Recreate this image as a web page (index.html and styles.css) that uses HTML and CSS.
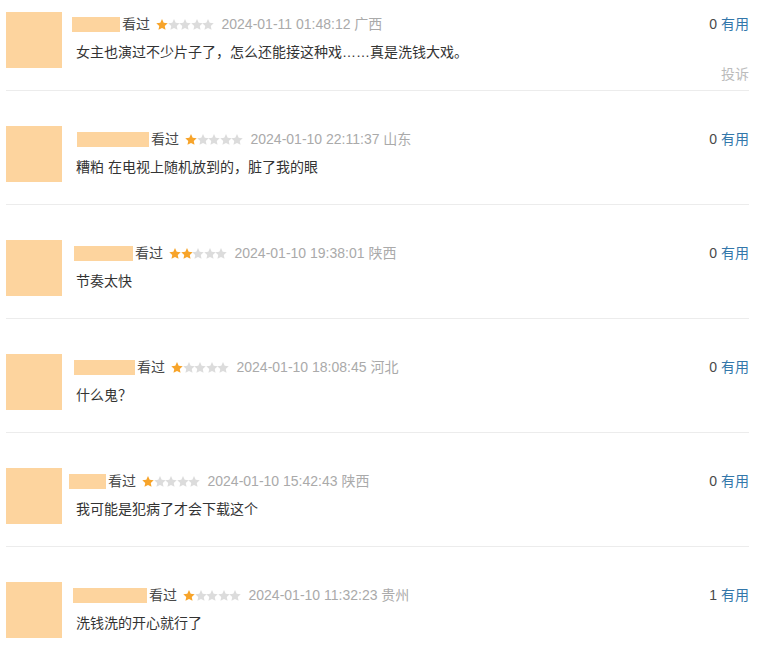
FILE: index.html
```html
<!DOCTYPE html>
<html lang="zh-CN">
<head>
  <meta charset="UTF-8" />
  <title>短评</title>
  <link rel="stylesheet" href="styles.css">
</head>
<body>
<svg class="defs" width="0" height="0">
  <defs>
    <polygon id="star" points="6,0 7.7,3.65 11.71,4.15 8.76,6.9 9.53,10.85 6,8.9 2.47,10.85 3.24,6.9 0.29,4.15 4.3,3.65"/>
  </defs>
</svg>

<div class="comments">

  <div class="item">
    <div class="avatar"></div>
    <div class="content">
      <div class="head">
        <div class="info">
          <span class="name" style="width:48px;margin-left:-4px"></span>
          <span class="watched">看过</span>
          <span class="stars">
            <svg class="star on" viewBox="0 0 12 11"><use href="#star"/></svg>
            <svg class="star" viewBox="0 0 12 11"><use href="#star"/></svg>
            <svg class="star" viewBox="0 0 12 11"><use href="#star"/></svg>
            <svg class="star" viewBox="0 0 12 11"><use href="#star"/></svg>
            <svg class="star" viewBox="0 0 12 11"><use href="#star"/></svg>
          </span>
          <span class="time">2024-01-11 01:48:12 广西</span>
        </div>
        <div class="votes">0 <a href="#">有用</a></div>
      </div>
      <p class="text">女主也演过不少片子了，怎么还能接这种戏……真是洗钱大戏。</p>
      <div class="actions"><a href="#">投诉</a></div>
    </div>
  </div>

  <div class="item">
    <div class="avatar"></div>
    <div class="content">
      <div class="head">
        <div class="info">
          <span class="name" style="width:72px;margin-left:1px"></span>
          <span class="watched">看过</span>
          <span class="stars">
            <svg class="star on" viewBox="0 0 12 11"><use href="#star"/></svg>
            <svg class="star" viewBox="0 0 12 11"><use href="#star"/></svg>
            <svg class="star" viewBox="0 0 12 11"><use href="#star"/></svg>
            <svg class="star" viewBox="0 0 12 11"><use href="#star"/></svg>
            <svg class="star" viewBox="0 0 12 11"><use href="#star"/></svg>
          </span>
          <span class="time">2024-01-10 22:11:37 山东</span>
        </div>
        <div class="votes">0 <a href="#">有用</a></div>
      </div>
      <p class="text">糟粕 在电视上随机放到的，脏了我的眼</p>
      <div class="actions hidden"><a href="#">投诉</a></div>
    </div>
  </div>

  <div class="item">
    <div class="avatar"></div>
    <div class="content">
      <div class="head">
        <div class="info">
          <span class="name" style="width:59px;margin-left:-2px"></span>
          <span class="watched">看过</span>
          <span class="stars">
            <svg class="star on" viewBox="0 0 12 11"><use href="#star"/></svg>
            <svg class="star on" viewBox="0 0 12 11"><use href="#star"/></svg>
            <svg class="star" viewBox="0 0 12 11"><use href="#star"/></svg>
            <svg class="star" viewBox="0 0 12 11"><use href="#star"/></svg>
            <svg class="star" viewBox="0 0 12 11"><use href="#star"/></svg>
          </span>
          <span class="time">2024-01-10 19:38:01 陕西</span>
        </div>
        <div class="votes">0 <a href="#">有用</a></div>
      </div>
      <p class="text">节奏太快</p>
      <div class="actions hidden"><a href="#">投诉</a></div>
    </div>
  </div>

  <div class="item">
    <div class="avatar"></div>
    <div class="content">
      <div class="head">
        <div class="info">
          <span class="name" style="width:61px;margin-left:-2px"></span>
          <span class="watched">看过</span>
          <span class="stars">
            <svg class="star on" viewBox="0 0 12 11"><use href="#star"/></svg>
            <svg class="star" viewBox="0 0 12 11"><use href="#star"/></svg>
            <svg class="star" viewBox="0 0 12 11"><use href="#star"/></svg>
            <svg class="star" viewBox="0 0 12 11"><use href="#star"/></svg>
            <svg class="star" viewBox="0 0 12 11"><use href="#star"/></svg>
          </span>
          <span class="time">2024-01-10 18:08:45 河北</span>
        </div>
        <div class="votes">0 <a href="#">有用</a></div>
      </div>
      <p class="text">什么鬼？</p>
      <div class="actions hidden"><a href="#">投诉</a></div>
    </div>
  </div>

  <div class="item">
    <div class="avatar"></div>
    <div class="content">
      <div class="head">
        <div class="info">
          <span class="name" style="width:37px;margin-left:-7px"></span>
          <span class="watched">看过</span>
          <span class="stars">
            <svg class="star on" viewBox="0 0 12 11"><use href="#star"/></svg>
            <svg class="star" viewBox="0 0 12 11"><use href="#star"/></svg>
            <svg class="star" viewBox="0 0 12 11"><use href="#star"/></svg>
            <svg class="star" viewBox="0 0 12 11"><use href="#star"/></svg>
            <svg class="star" viewBox="0 0 12 11"><use href="#star"/></svg>
          </span>
          <span class="time">2024-01-10 15:42:43 陕西</span>
        </div>
        <div class="votes">0 <a href="#">有用</a></div>
      </div>
      <p class="text">我可能是犯病了才会下载这个</p>
      <div class="actions hidden"><a href="#">投诉</a></div>
    </div>
  </div>

  <div class="item">
    <div class="avatar"></div>
    <div class="content">
      <div class="head">
        <div class="info">
          <span class="name" style="width:74px;margin-left:-3px"></span>
          <span class="watched">看过</span>
          <span class="stars">
            <svg class="star on" viewBox="0 0 12 11"><use href="#star"/></svg>
            <svg class="star" viewBox="0 0 12 11"><use href="#star"/></svg>
            <svg class="star" viewBox="0 0 12 11"><use href="#star"/></svg>
            <svg class="star" viewBox="0 0 12 11"><use href="#star"/></svg>
            <svg class="star" viewBox="0 0 12 11"><use href="#star"/></svg>
          </span>
          <span class="time">2024-01-10 11:32:23 贵州</span>
        </div>
        <div class="votes">1 <a href="#">有用</a></div>
      </div>
      <p class="text">洗钱洗的开心就行了</p>
      <div class="actions hidden"><a href="#">投诉</a></div>
    </div>
  </div>

</div>
</body>
</html>
```

FILE: styles.css
```css
* {
  margin: 0;
  padding: 0;
  box-sizing: border-box;
}

body {
  font-family: "Liberation Sans", Arial, "Noto Sans CJK SC", sans-serif;
  font-size: 14px;
  color: #494949;
  background: #fff;
}

.defs {
  position: absolute;
  width: 0;
  height: 0;
}

a {
  text-decoration: none;
}

.comments {
  margin: 0 12px 0 6px;
}

.item {
  display: flex;
  align-items: flex-start;
  padding: 36px 0 5px;
  border-bottom: 1px solid #ececec;
}

.item:first-child {
  padding: 12px 0 6px;
}

.avatar {
  width: 56px;
  height: 56px;
  background: #fdd49e;
  flex-shrink: 0;
}

.item + .item .avatar {
  margin-top: -1px;
}

.content {
  flex: 1;
  margin-left: 14px;
}

.head {
  display: flex;
  justify-content: space-between;
  align-items: center;
  height: 24px;
  line-height: 24px;
}

.info {
  display: flex;
  align-items: center;
}

.name {
  display: inline-block;
  height: 15px;
  background: #fdd49e;
  margin-right: 2px;
}

.watched {
  color: #494949;
}

.stars {
  display: flex;
  margin-left: 6px;
}

.star {
  display: block;
  width: 12px;
  height: 11px;
  margin-right: -0.5px;
  fill: #dcdcdc;
  flex-shrink: 0;
}

.star.on {
  fill: #f7a42a;
}

.time {
  color: #aaa;
  margin-left: 8px;
}

.votes {
  color: #494949;
}

.votes a {
  color: #37a;
}

.text {
  margin-top: 4px;
  line-height: 24px;
  color: #333;
  font-size: 14px;
}

.actions {
  text-align: right;
  line-height: 20px;
}

.actions a {
  color: #bbb;
}

.hidden {
  visibility: hidden;
}
```
